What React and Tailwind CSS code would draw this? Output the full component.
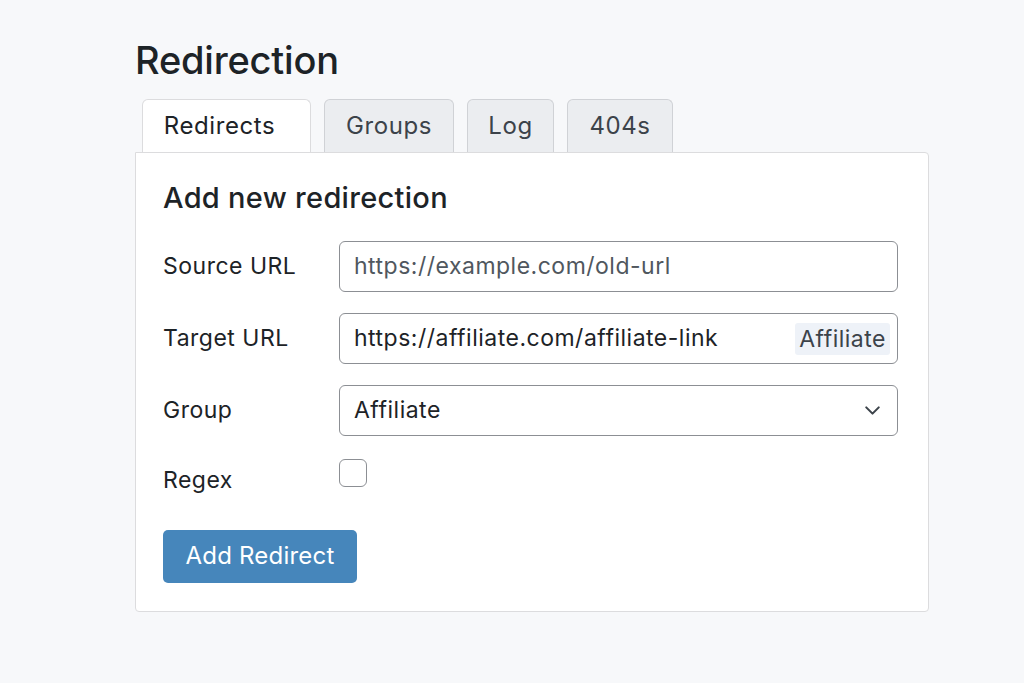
import { ChevronDown } from 'lucide-react';

const tabs = [
  { name: 'Redirects', w: 'w-[169px]' },
  { name: 'Groups', w: 'w-[130px]' },
  { name: 'Log', w: 'w-[87px]' },
  { name: '404s', w: 'w-[106px]' },
];

function Row({ label, children, labelClass = '' }) {
  return (
    <div className="flex items-center">
      <div className={`w-[176px] shrink-0 text-[23px] tracking-[0.5px] text-[#1d2327] ${labelClass}`}>{label}</div>
      <div className="flex-1">{children}</div>
    </div>
  );
}

export default function App() {
  return (
    <div className="min-h-[683px] w-full bg-[#f7f8fa] font-['Inter',sans-serif] text-[#1d2327]">
      <div className="pl-[135px] pr-[95px] pt-[38px]">
        <h1 className="text-[38px] font-medium leading-[44px] tracking-[-0.2px] text-[#1d2327]">Redirection</h1>

        <div className="mt-[17px] flex gap-[13px] pl-[7px]">
          {tabs.map((t, i) => (
            <div
              key={t.name}
              className={`relative flex h-[53px] items-center justify-center rounded-t-[6px] border border-b-0 text-[24px] tracking-[0.6px] ${t.w} ${
                i === 0
                  ? 'z-10 -mb-px border-[#dcdcde] bg-white pr-[14px] text-[#1d2327]'
                  : 'border-[#d0d2d6] bg-[#ebedf0] text-[#3c434a]'
              }`}
            >
              {t.name}
            </div>
          ))}
        </div>

        <div className="rounded-b-[4px] rounded-tr-[4px] border border-[#dcdcde] bg-white pl-[27px] pr-[30px] pt-[27px] pb-[28px]">
          <h2 className="text-[29px] font-medium leading-[36px] tracking-[0.3px] text-[#1d2327]">Add new redirection</h2>

          <div className="mt-[25px] flex flex-col gap-[21px]">
            <Row label="Source URL">
              <div className="flex h-[51px] items-center rounded-[6px] border border-[#8c8f94] px-[14px] text-[23px] tracking-[0.5px] text-[#50575e]">
                https://example.com/old-url
              </div>
            </Row>
            <Row label="Target URL">
              <div className="flex h-[51px] items-center justify-between rounded-[6px] border border-[#8c8f94] pl-[14px] pr-[7px] text-[23px] tracking-[0.5px] text-[#1d2327]">
                <span>https://affiliate.com/affiliate-link</span>
                <span className="rounded-[3px] bg-[#eef2f8] px-[4px] leading-[32px] text-[#3c434a]">Affiliate</span>
              </div>
            </Row>
            <Row label="Group">
              <div className="flex h-[51px] items-center justify-between rounded-[6px] border border-[#8c8f94] pl-[14px] pr-[12px] text-[23px] tracking-[0.5px] text-[#1d2327]">
                <span>Affiliate</span>
                <ChevronDown size={25} strokeWidth={2} className="text-[#3c434a]" />
              </div>
            </Row>
            <Row label="Regex" labelClass="pt-[6px]">
              <div className="flex h-[36px] items-start">
                <div className="h-[28px] w-[28px] rounded-[6px] border border-[#8c8f94] bg-white" />
              </div>
            </Row>
          </div>

          <button className="mt-[32px] h-[53px] w-[194px] rounded-[5px] bg-[#4686bb] text-[24px] tracking-[0.2px] text-white">
            Add Redirect
          </button>
        </div>
      </div>
    </div>
  );
}
